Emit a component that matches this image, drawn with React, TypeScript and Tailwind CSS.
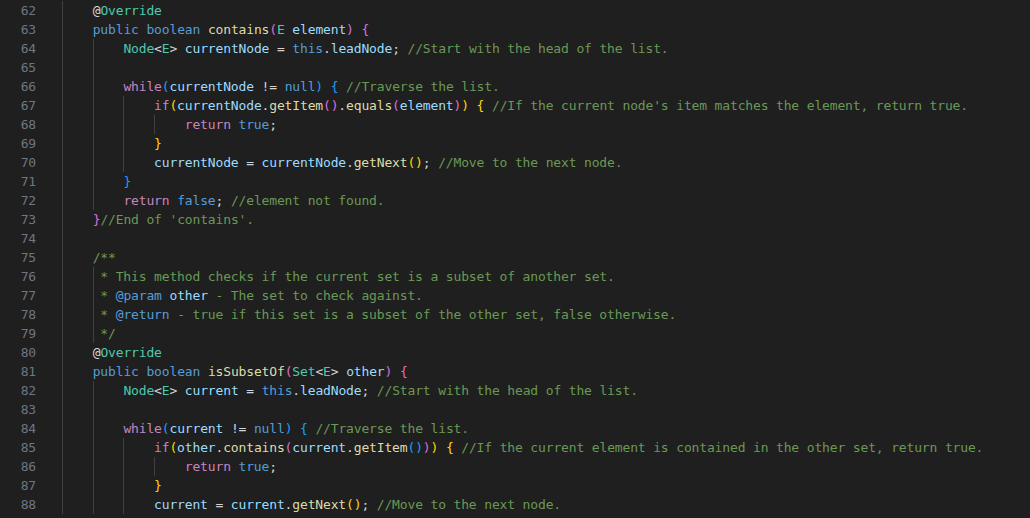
import React from 'react';

type Tok = [string, string];
type Line = { n: number; guides: number[]; toks: Tok[] };

const C = {
  kw: 'text-[#569cd6]',
  ctl: 'text-[#c586c0]',
  fn: 'text-[#dcdcaa]',
  v: 'text-[#9cdcfe]',
  ty: 'text-[#4ec9b0]',
  cm: 'text-[#6a9955]',
  p: 'text-[#d4d4d4]',
  b1: 'text-[#ffd700]',
  b2: 'text-[#da70d6]',
  b3: 'text-[#179fff]',
};

const override: Tok[] = [['@', C.p], ['Override', C.ty]];

const lines: Line[] = [
  { n: 62, guides: [4], toks: override },
  {
    n: 63,
    guides: [4],
    toks: [
      ['public', C.kw], [' ', C.p], ['boolean', C.kw], [' ', C.p], ['contains', C.fn], ['(', C.b2],
      ['E', C.ty], [' ', C.p], ['element', C.v], [')', C.b2], [' ', C.p], ['{', C.b2],
    ],
  },
  {
    n: 64,
    guides: [4, 4],
    toks: [
      ['Node', C.ty], ['<', C.p], ['E', C.ty], ['>', C.p], [' ', C.p], ['currentNode', C.v], [' = ', C.p],
      ['this', C.kw], ['.', C.p], ['leadNode', C.v], ['; ', C.p], ['//Start with the head of the list.', C.cm],
    ],
  },
  { n: 65, guides: [4, 4], toks: [] },
  {
    n: 66,
    guides: [4, 4],
    toks: [
      ['while', C.ctl], ['(', C.b3], ['currentNode', C.v], [' != ', C.p], ['null', C.kw], [')', C.b3], [' ', C.p],
      ['{', C.b3], [' //Traverse the list.', C.cm],
    ],
  },
  {
    n: 67,
    guides: [4, 4, 4],
    toks: [
      ['if', C.ctl], ['(', C.b1], ['currentNode', C.v], ['.', C.p], ['getItem', C.fn], ['()', C.b2], ['.', C.p],
      ['equals', C.fn], ['(', C.b2], ['element', C.v], [')', C.b2], [')', C.b1], [' ', C.p], ['{', C.b1],
      [" //If the current node's item matches the element, return true.", C.cm],
    ],
  },
  { n: 68, guides: [4, 4, 4, 4], toks: [['return', C.ctl], [' ', C.p], ['true', C.kw], [';', C.p]] },
  { n: 69, guides: [4, 4, 4], toks: [['}', C.b1]] },
  {
    n: 70,
    guides: [4, 4, 4],
    toks: [
      ['currentNode', C.v], [' = ', C.p], ['currentNode', C.v], ['.', C.p], ['getNext', C.fn], ['()', C.b1],
      ['; ', C.p], ['//Move to the next node.', C.cm],
    ],
  },
  { n: 71, guides: [4, 4], toks: [['}', C.b3]] },
  {
    n: 72,
    guides: [4, 4],
    toks: [['return', C.ctl], [' ', C.p], ['false', C.kw], ['; ', C.p], ['//element not found.', C.cm]],
  },
  { n: 73, guides: [4], toks: [['}', C.b2], ["//End of 'contains'.", C.cm]] },
  { n: 74, guides: [4], toks: [] },
  { n: 75, guides: [4], toks: [['/**', C.cm]] },
  { n: 76, guides: [4, 1], toks: [['* This method checks if the current set is a subset of another set.', C.cm]] },
  {
    n: 77,
    guides: [4, 1],
    toks: [['* ', C.cm], ['@param', C.kw], [' ', C.cm], ['other', C.v], [' - The set to check against.', C.cm]],
  },
  {
    n: 78,
    guides: [4, 1],
    toks: [
      ['* ', C.cm], ['@return', C.kw],
      [' - true if this set is a subset of the other set, false otherwise.', C.cm],
    ],
  },
  { n: 79, guides: [4, 1], toks: [['*/', C.cm]] },
  { n: 80, guides: [4], toks: override },
  {
    n: 81,
    guides: [4],
    toks: [
      ['public', C.kw], [' ', C.p], ['boolean', C.kw], [' ', C.p], ['isSubsetOf', C.fn], ['(', C.b2],
      ['Set', C.ty], ['<', C.p], ['E', C.ty], ['>', C.p], [' ', C.p], ['other', C.v], [')', C.b2], [' ', C.p],
      ['{', C.b2],
    ],
  },
  {
    n: 82,
    guides: [4, 4],
    toks: [
      ['Node', C.ty], ['<', C.p], ['E', C.ty], ['>', C.p], [' ', C.p], ['current', C.v], [' = ', C.p],
      ['this', C.kw], ['.', C.p], ['leadNode', C.v], ['; ', C.p], ['//Start with the head of the list.', C.cm],
    ],
  },
  { n: 83, guides: [4, 4], toks: [] },
  {
    n: 84,
    guides: [4, 4],
    toks: [
      ['while', C.ctl], ['(', C.b3], ['current', C.v], [' != ', C.p], ['null', C.kw], [')', C.b3], [' ', C.p],
      ['{', C.b3], [' //Traverse the list.', C.cm],
    ],
  },
  {
    n: 85,
    guides: [4, 4, 4],
    toks: [
      ['if', C.ctl], ['(', C.b1], ['other', C.v], ['.', C.p], ['contains', C.fn], ['(', C.b2], ['current', C.v],
      ['.', C.p], ['getItem', C.fn], ['()', C.b3], [')', C.b2], [')', C.b1], [' ', C.p], ['{', C.b1],
      [' //If the current element is contained in the other set, return true.', C.cm],
    ],
  },
  { n: 86, guides: [4, 4, 4, 4], toks: [['return', C.ctl], [' ', C.p], ['true', C.kw], [';', C.p]] },
  { n: 87, guides: [4, 4, 4], toks: [['}', C.b1]] },
  {
    n: 88,
    guides: [4, 4, 4],
    toks: [
      ['current', C.v], [' = ', C.p], ['current', C.v], ['.', C.p], ['getNext', C.fn], ['()', C.b1], ['; ', C.p],
      ['//Move to the next node.', C.cm],
    ],
  },
];

// indent guide: full tab stop (4 cols) or a single column for javadoc lines
function Guide({ w }: { w: number }) {
  return (
    <span
      className={
        'inline-block h-full shrink-0 border-l border-[#404040] ' + (w === 4 ? 'w-[30.7px]' : 'w-[7.67px]')
      }
    />
  );
}

export default function App() {
  return (
    <div
      className="h-[518px] w-[1030px] overflow-hidden bg-[#1f1f1f] text-[13px] tracking-[-0.15px]"
      style={{ fontFamily: '"DejaVu Sans Mono", "Liberation Mono", monospace' }}
    >
      <div className="pt-px">
        {lines.map((l) => (
          <div key={l.n} className="flex h-[19px] items-stretch leading-[19px]">
            <div className="w-[62px] shrink-0 pr-[26px] text-right text-[#6e7681]">{l.n}</div>
            <div className="flex items-stretch whitespace-pre">
              {l.guides.map((g, i) => (
                <Guide key={i} w={g} />
              ))}
              <span>
                {l.toks.map(([t, c], i) => (
                  <span key={i} className={c}>
                    {t}
                  </span>
                ))}
              </span>
            </div>
          </div>
        ))}
      </div>
    </div>
  );
}
